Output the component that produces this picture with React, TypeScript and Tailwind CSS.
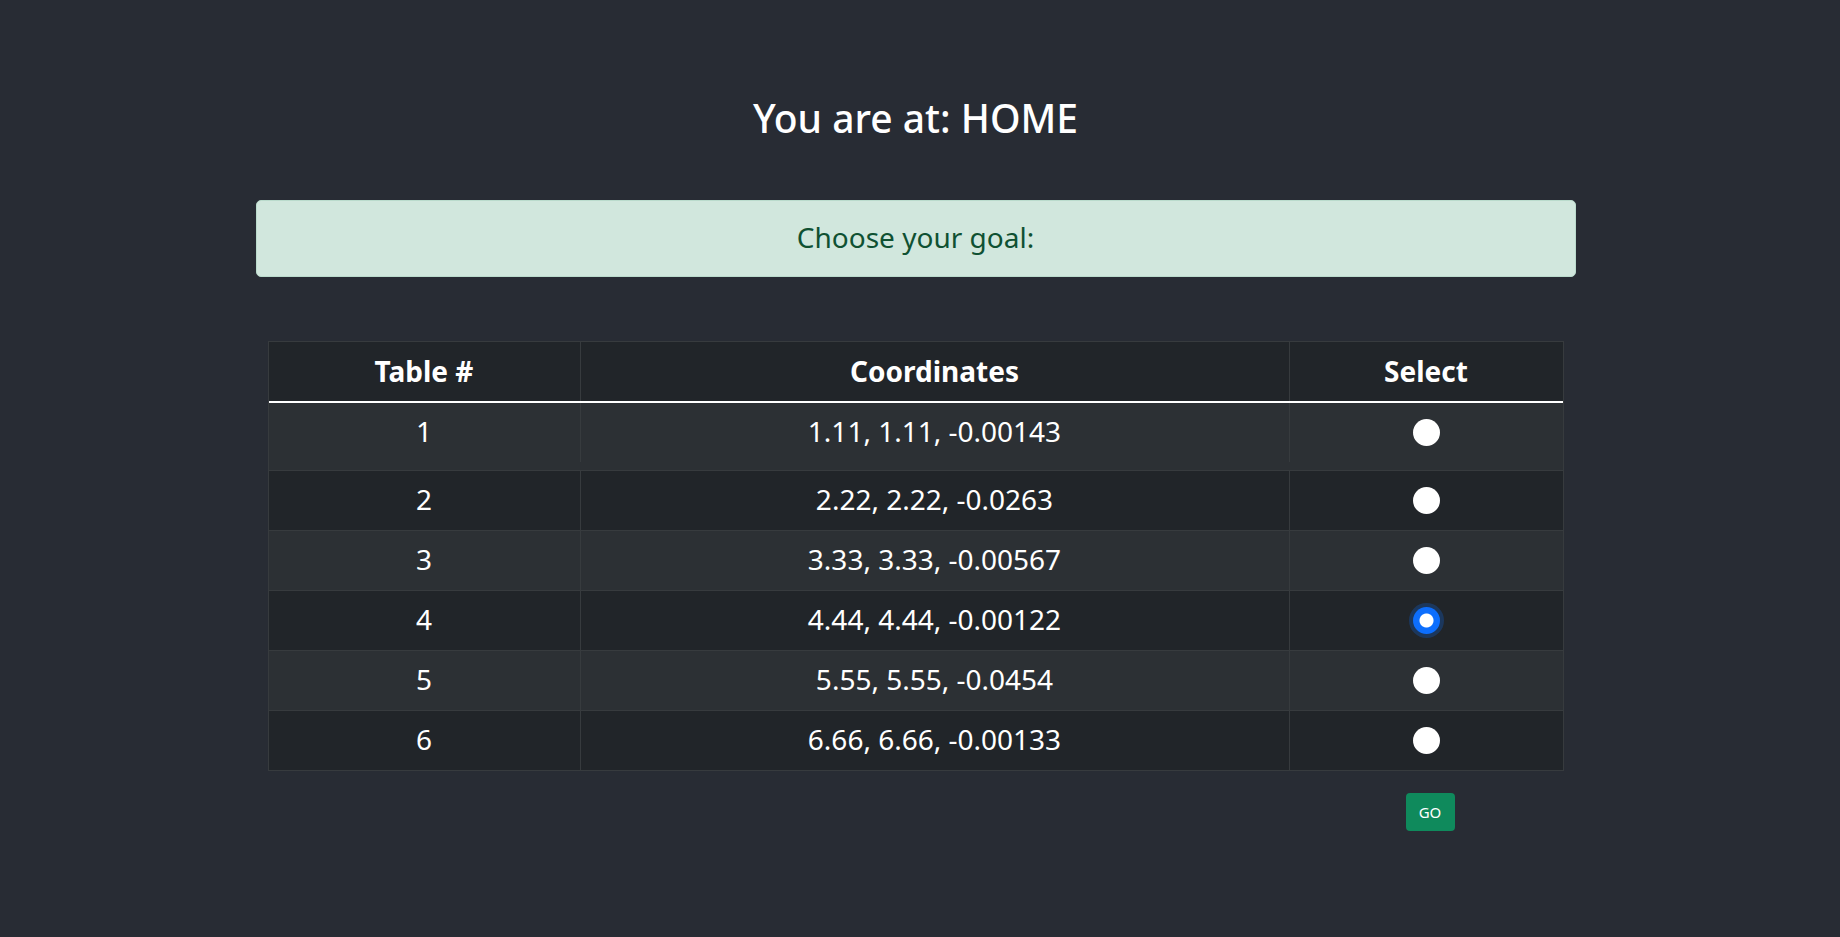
import React, { useState } from "react";

const rows = [
  { id: 1, coords: "1.11, 1.11, -0.00143" },
  { id: 2, coords: "2.22, 2.22, -0.0263" },
  { id: 3, coords: "3.33, 3.33, -0.00567" },
  { id: 4, coords: "4.44, 4.44, -0.00122" },
  { id: 5, coords: "5.55, 5.55, -0.0454" },
  { id: 6, coords: "6.66, 6.66, -0.00133" },
];

export default function App() {
  const [selected, setSelected] = useState(4);

  return (
    <div className="h-[937px] overflow-hidden bg-[#282c34] flex flex-col items-center pr-[9px] font-['Noto_Sans','Open_Sans',sans-serif] text-white">
      <h1 className="mt-[94px] text-[39px] leading-[48px] font-medium">You are at: HOME</h1>

      <div className="mt-[58px] w-[1320px] h-[77px] pb-[4px] flex items-center justify-center rounded-[5px] border border-[#badbcc] bg-[#d1e7dd] text-[#0f5132] text-[28px]">
        Choose your goal:
      </div>

      <div className="mt-[64px] w-[1296px] border border-[#373b3e] bg-[#212529] text-[28px]">
        <div className="grid grid-cols-[312px_709px_1fr] h-[61px] border-b-2 border-white font-bold">
          <div className="flex items-center justify-center pb-[2px] border-r border-[#373b3e]">Table #</div>
          <div className="flex items-center justify-center pb-[2px] border-r border-[#373b3e]">Coordinates</div>
          <div className="flex items-center justify-center pb-[2px]">Select</div>
        </div>
        {rows.map((r, i) => (
          <div
            key={r.id}
            className={
              "grid grid-cols-[312px_709px_1fr] " +
              (i % 2 === 0 ? "bg-[#2c3034] " : "bg-[#212529] ") +
              (i === 0 ? "h-[68px] pb-[8px] border-b border-[#373b3e]" : i === rows.length - 1 ? "h-[59px]" : "h-[60px] border-b border-[#373b3e]")
            }
          >
            <div className="flex items-center justify-center pb-[3px] border-r border-[#373b3e]">{r.id}</div>
            <div className="flex items-center justify-center pb-[3px] border-r border-[#373b3e]">{r.coords}</div>
            <div className="flex items-center justify-center pb-[1px]">
              <input
                type="radio"
                name="goal"
                checked={selected === r.id}
                onChange={() => setSelected(r.id)}
                className="appearance-none w-[27px] h-[27px] rounded-full bg-white cursor-pointer checked:bg-[#0d6efd] checked:bg-[radial-gradient(circle,#ffffff_0_6.5px,#0d6efd_7.5px)] checked:shadow-[0_0_0_4px_rgba(13,110,253,0.25)]"
              />
            </div>
          </div>
        ))}
      </div>

      <div className="mt-[22px] w-[1296px] grid grid-cols-[312px_709px_1fr]">
        <div />
        <div />
        <div className="flex justify-center pl-[8px]">
          <button
            type="button"
            className="w-[49px] h-[38px] rounded-[4px] bg-[#0f8a5c] text-white text-[15px] flex items-center justify-center"
          >
            GO
          </button>
        </div>
      </div>
    </div>
  );
}
